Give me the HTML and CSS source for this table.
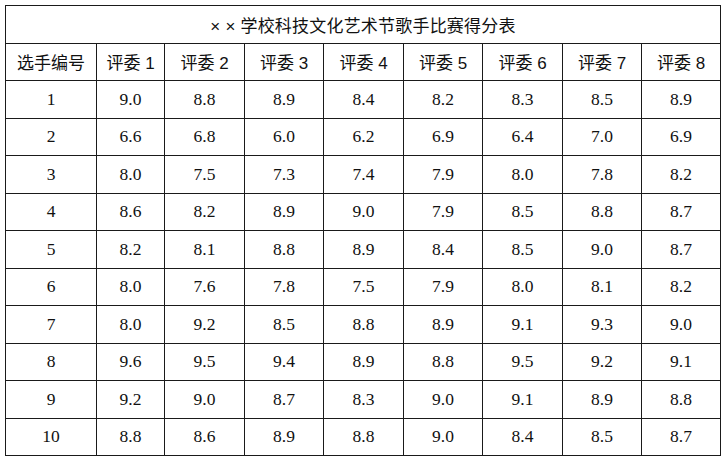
FILE: index.html
```html
<!DOCTYPE html>
<html lang="zh">
<head>
<meta charset="utf-8">
<title>×× 学校科技文化艺术节歌手比赛得分表</title>
<link rel="stylesheet" href="styles.css">
</head>
<body>
<table class="score">
  <colgroup>
    <col class="c0"><col class="c1"><col class="c2"><col class="c3"><col class="c4"><col class="c5"><col class="c6"><col class="c7"><col class="c8">
  </colgroup>
  <thead>
    <tr class="title-row"><th colspan="9" class="title">× × 学校科技文化艺术节歌手比赛得分表</th></tr>
    <tr class="head-row">
      <th>选手编号</th><th>评委 1</th><th>评委 2</th><th>评委 3</th><th>评委 4</th><th>评委 5</th><th>评委 6</th><th>评委 7</th><th>评委 8</th>
    </tr>
  </thead>
  <tbody>
    <tr><td>1</td><td>9.0</td><td>8.8</td><td>8.9</td><td>8.4</td><td>8.2</td><td>8.3</td><td>8.5</td><td>8.9</td></tr>
    <tr><td>2</td><td>6.6</td><td>6.8</td><td>6.0</td><td>6.2</td><td>6.9</td><td>6.4</td><td>7.0</td><td>6.9</td></tr>
    <tr><td>3</td><td>8.0</td><td>7.5</td><td>7.3</td><td>7.4</td><td>7.9</td><td>8.0</td><td>7.8</td><td>8.2</td></tr>
    <tr><td>4</td><td>8.6</td><td>8.2</td><td>8.9</td><td>9.0</td><td>7.9</td><td>8.5</td><td>8.8</td><td>8.7</td></tr>
    <tr><td>5</td><td>8.2</td><td>8.1</td><td>8.8</td><td>8.9</td><td>8.4</td><td>8.5</td><td>9.0</td><td>8.7</td></tr>
    <tr><td>6</td><td>8.0</td><td>7.6</td><td>7.8</td><td>7.5</td><td>7.9</td><td>8.0</td><td>8.1</td><td>8.2</td></tr>
    <tr><td>7</td><td>8.0</td><td>9.2</td><td>8.5</td><td>8.8</td><td>8.9</td><td>9.1</td><td>9.3</td><td>9.0</td></tr>
    <tr><td>8</td><td>9.6</td><td>9.5</td><td>9.4</td><td>8.9</td><td>8.8</td><td>9.5</td><td>9.2</td><td>9.1</td></tr>
    <tr><td>9</td><td>9.2</td><td>9.0</td><td>8.7</td><td>8.3</td><td>9.0</td><td>9.1</td><td>8.9</td><td>8.8</td></tr>
    <tr><td>10</td><td>8.8</td><td>8.6</td><td>8.9</td><td>8.8</td><td>9.0</td><td>8.4</td><td>8.5</td><td>8.7</td></tr>
  </tbody>
</table>
</body>
</html>
```
FILE: styles.css
```css
html, body {
  margin: 0;
  background: #ffffff;
}
body {
  padding: 5px 0 0 5px;
}
.score {
  border-collapse: collapse;
  table-layout: fixed;
  width: 715px;
  color: #111;
}
.c0 { width: 91px; }
.c1 { width: 68px; }
.c2 { width: 80px; }
.c3 { width: 79px; }
.c4 { width: 80px; }
.c5 { width: 79px; }
.c6 { width: 80px; }
.c7 { width: 79px; }
.c8 { width: 79px; }
.score th,
.score td {
  border: 1px solid #1a1a1a;
  padding: 0;
  height: 36.5px;
  text-align: center;
  vertical-align: middle;
}
.score th {
  font-family: "Liberation Sans", "Noto Sans CJK SC", sans-serif;
  font-size: 17px;
  font-weight: normal;
}
.score .title {
  letter-spacing: 0.2px;
}
.score td {
  font-family: "Liberation Serif", "Noto Serif CJK SC", serif;
  font-size: 17.5px;
}
```
